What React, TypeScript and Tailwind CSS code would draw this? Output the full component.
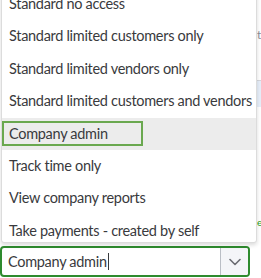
import React from "react";

const options = [
  "Standard no access",
  "Standard limited customers only",
  "Standard limited vendors only",
  "Standard limited customers and vendors",
  "Company admin",
  "Track time only",
  "View company reports",
  "Take payments - created by self",
];

export default function App() {
  return (
    <div
      className="relative w-[261px] h-[278px] overflow-hidden bg-white text-[#393a3d] tracking-[-0.3px]"
      style={{ fontFamily: "Lato, 'Open Sans', sans-serif" }}
    >
      {/* background page bits peeking at the right */}
      <div className="absolute left-[257px] top-[26px] text-[12px] text-[#8d9096]">t</div>
      <div className="absolute left-[257px] top-[80px] w-[4px] h-[27px] bg-[#e6eef9] border-t border-[#d4d7dc]" />
      <div className="absolute left-[257px] top-[215px] text-[10px] text-[#2ca01c]">e</div>

      <div className="flex flex-col">
        <div className="relative z-10 ml-[1px] w-[256px] h-[256px] -mt-[13px] bg-white border border-[#dcdcdc] rounded-[3px] shadow-[0_2px_4px_rgba(0,0,0,0.15)] overflow-hidden">
          {options.map((o) =>
            o === "Company admin" ? (
              <div key={o} className="h-[32.4px] bg-[#ececec] flex items-center">
                <div className="w-[141px] h-[25px] border-2 border-[#6aa84f] flex items-center pl-[5px] text-[14.5px] leading-none">
                  {o}
                </div>
              </div>
            ) : (
              <div key={o} className="h-[32.4px] flex items-center pl-[7px] text-[14.5px] leading-none whitespace-nowrap">
                {o}
              </div>
            )
          )}
        </div>
        <div className="mt-[3px] w-[250px] h-[31px] flex border-2 border-[#2e8b2e] rounded-[4px] overflow-hidden bg-white">
          <div className="flex-1 flex items-center pl-[6px] text-[14.5px]">
            Company admin
            <span className="inline-block w-px h-[17px] bg-[#393a3d] ml-px" />
          </div>
          <div className="w-[28px] border-l border-[#babec5] bg-[#f4f5f8] flex items-center justify-center">
            <svg width="12" height="8" viewBox="0 0 12 8" fill="none">
              <path d="M1 1.5L6 6.5L11 1.5" stroke="#6b6c72" strokeWidth="1.6" strokeLinecap="round" strokeLinejoin="round" />
            </svg>
          </div>
        </div>
      </div>
    </div>
  );
}
